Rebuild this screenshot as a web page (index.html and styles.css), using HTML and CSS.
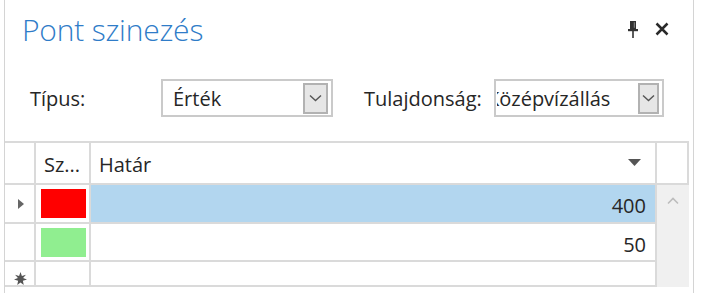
FILE: index.html
```html
<!DOCTYPE html>
<html>
<head>
<meta charset="utf-8">
<link rel="stylesheet" href="styles.css">
</head>
<body>
<div class="panel">
  <div class="titlebar">
    <div class="title">Pont szinezés</div>
    <div class="tools">
      <svg class="pin" width="12" height="18" viewBox="0 0 12 18"><path d="M3 1h6v8H3z" fill="#333"/><path d="M1 9h10v2.2H1z" fill="#333"/><path d="M5.2 11h1.6v7H5.2z" fill="#333"/><path d="M6.8 2.2h1v5.6h-1z" fill="#fff" opacity="0.45"/></svg>
      <svg class="close" width="14" height="14" viewBox="0 0 14 14"><path d="M1.5 1.5l11 11M12.5 1.5l-11 11" stroke="#2a2a2a" stroke-width="2.5"/></svg>
    </div>
  </div>
  <div class="filters">
    <span class="label l1">Típus:</span>
    <div class="combo c1"><span class="val">Érték</span><span class="btn"><svg width="13" height="8" viewBox="0 0 13 8"><path d="M1 1.5l5.5 5 5.5-5" fill="none" stroke="#555" stroke-width="1.4"/></svg></span></div>
    <span class="label l2">Tulajdonság:</span>
    <div class="combo c2"><span class="val clip"><span class="inner">Középvízállás</span></span><span class="btn"><svg width="13" height="8" viewBox="0 0 13 8"><path d="M1 1.5l5.5 5 5.5-5" fill="none" stroke="#555" stroke-width="1.4"/></svg></span></div>
  </div>
  <div class="grid">
    <div class="cell hdr rh"></div>
    <div class="cell hdr">Sz...</div>
    <div class="cell hdr hatar">Határ<svg class="sort" width="13" height="7" viewBox="0 0 13 7"><path d="M0 0h13L6.5 7z" fill="#555"/></svg></div>
    <div class="cell hdr last"></div>

    <div class="cell rh"><svg width="6" height="10" viewBox="0 0 6 10"><path d="M0 0l6 5-6 5z" fill="#666"/></svg></div>
    <div class="cell sw"><span class="swatch red"></span></div>
    <div class="cell num sel">400</div>
    <div class="scroll"><svg width="12" height="8" viewBox="0 0 12 8"><path d="M1 6.5l5-5 5 5" fill="none" stroke="#bdbdbd" stroke-width="1.6"/></svg></div>

    <div class="cell rh"></div>
    <div class="cell sw"><span class="swatch green"></span></div>
    <div class="cell num">50</div>

    <div class="cell rh star"><svg width="13" height="13" viewBox="0 0 12 12"><path d="M6 0l1.3 3.8L11 2.5 8.4 5.5 12 7l-3.8 1L9 12 6 9.6 3 12l.8-4L0 7l3.6-1.5L1 2.5l3.7 1.3z" fill="#555"/></svg></div>
    <div class="cell sw"></div>
    <div class="cell num"></div>
  </div>
</div>
</body>
</html>
```

FILE: styles.css
```css
html, body {
  margin: 0;
  padding: 0;
  background: #fff;
}
body {
  font-family: "Open Sans", "Noto Sans", sans-serif;
  color: #262626;
  width: 701px;
  height: 293px;
  overflow: hidden;
}
.panel {
  margin-left: 4px;
  width: 688px;
  height: 293px;
  border-left: 1px solid #d4d4d4;
  border-right: 1px solid #d4d4d4;
  box-sizing: content-box;
}
.titlebar {
  display: flex;
  align-items: center;
  height: 60px;
  padding-left: 17px;
  padding-right: 24px;
}
.title {
  flex: 1;
  font-weight: 300;
  font-size: 30px;
  color: #2f7cc8;
  letter-spacing: -0.2px;
  margin-top: -2px;
}
.tools {
  display: flex;
  align-items: center;
  gap: 16px;
  margin-top: -2px;
}
.filters {
  display: flex;
  align-items: center;
  height: 38px;
  margin-top: 19px;
}
.label {
  font-size: 20px;
}
.l1 {
  margin-left: 25px;
  width: 131px;
}
.l2 {
  margin-left: 31px;
  width: 130px;
  white-space: nowrap;
}
.combo {
  display: flex;
  align-items: center;
  height: 38px;
  box-sizing: border-box;
  border: 2px solid #cacaca;
  padding: 2px 3px 2px 0;
}
.c1 { width: 172px; }
.c2 { width: 170px; }
.val {
  flex: 1;
  font-size: 20px;
  padding-left: 10px;
  white-space: nowrap;
}
.clip {
  overflow: hidden;
  padding-left: 0;
  margin-left: 1px;
  margin-right: 6px;
}
.clip .inner {
  display: inline-block;
  margin-left: -10px;
}
.btn {
  flex: none;
  width: 25px;
  height: 31px;
  box-sizing: border-box;
  border: 2px solid #b2b2b2;
  background: #e6e6e6;
  display: flex;
  align-items: center;
  justify-content: center;
}
.c2 .btn { width: 21px; }
.grid {
  margin-top: 24px;
  width: 684px;
  display: grid;
  grid-template-columns: 31px 55px 566px 32px;
  grid-template-rows: 42px 39px 38px 25px;
  border-top: 2px solid #dadada;
  border-right: 2px solid #dadada;
  box-sizing: border-box;
}
.cell {
  box-sizing: border-box;
  border-right: 2px solid #dadada;
  border-bottom: 2px solid #dadada;
  display: flex;
  align-items: center;
  font-size: 20px;
}
.hdr {
  padding-left: 8px;
  font-size: 20px;
  padding-top: 2px;
}
.hdr.rh { padding-left: 0; }
.hatar {
  justify-content: space-between;
  padding-right: 14px;
}
.sort { margin-top: -4px; }
.last { border-right: none; }
.rh {
  justify-content: center;
  padding-left: 2px;
}
.star {
  align-items: flex-end;
  padding-bottom: 0;
}
.sw {
  padding: 4px 3px 4px 5px;
}
.swatch {
  display: block;
  width: 45px;
  height: 29px;
}
.red { background: #ff0000; }
.green { background: #90ee90; }
.num {
  justify-content: flex-end;
  padding-right: 9px;
  padding-top: 4px;
}
.sel { background: #b2d6ef; }
.scroll {
  grid-column: 4;
  grid-row: 2 / span 3;
  background: #f0f0f0;
  display: flex;
  justify-content: center;
  align-items: flex-start;
  padding-top: 12px;
}
```
